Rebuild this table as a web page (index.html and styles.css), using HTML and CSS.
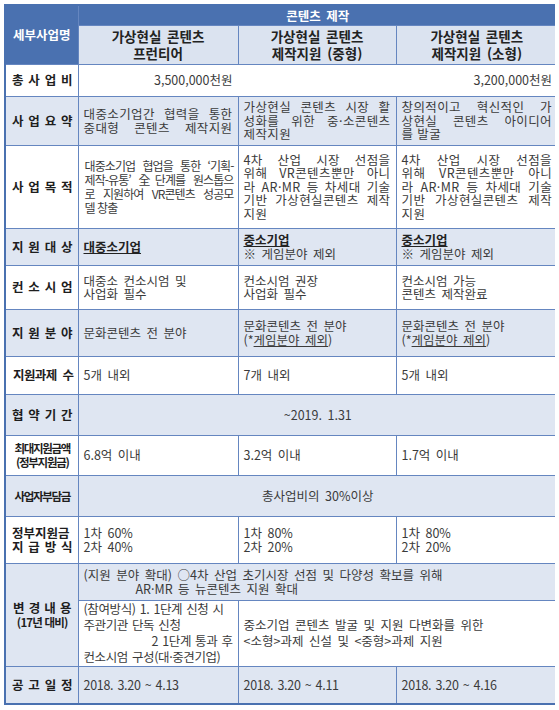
FILE: index.html
```html
<!DOCTYPE html>
<html lang="ko">
  <head>
    <meta charset="UTF-8">
    <title>콘텐츠 제작 지원사업</title>
    <link rel="stylesheet" href="styles.css">
  </head>
  <body>

    <table class="plan">
      <colgroup>
        <col class="c-label">
        <col class="c-one">
        <col class="c-two">
        <col class="c-three">
      </colgroup>

      <tr class="r-head">
        <td class="head dark" rowspan="2">세부사업명</td>
        <td class="head dark" colspan="3">콘텐츠 제작</td>
      </tr>
      <tr class="r-sub">
        <td class="sub">가상현실 콘텐츠<br>프런티어</td>
        <td class="sub">가상현실 콘텐츠<br>제작지원 (중형)</td>
        <td class="sub">가상현실 콘텐츠<br>제작지원 (소형)</td>
      </tr>

      <tr class="r-total">
        <td class="label">총 사 업 비</td>
        <td class="num open-r">3,500,000천원</td>
        <td class="num" colspan="2">3,200,000천원</td>
      </tr>

      <tr class="r-summary blue">
        <td class="label">사 업 요 약</td>
        <td class="jus">
          <span>대중소기업간 협력을 통한</span>
          <span>중대형 콘텐츠 제작지원</span>
        </td>
        <td class="jus">
          <span>가상현실 콘텐츠 시장 활</span>
          <span>성화를 위한 중·소콘텐츠</span>
          <span class="last">제작지원</span>
        </td>
        <td class="jus">
          <span>창의적이고 혁신적인 가</span>
          <span>상현실 콘텐츠 아이디어</span>
          <span class="last">를 발굴</span>
        </td>
      </tr>

      <tr class="r-purpose">
        <td class="label">사 업 목 적</td>
        <td class="jus tight">
          <span>대중소기업 협업을 통한 ‘기획-</span>
          <span>제작-유통’ 全단계를 원스톱으</span>
          <span>로 지원하여 VR콘텐츠 성공모</span>
          <span class="last">델 창출</span>
        </td>
        <td class="jus">
          <span>4차 산업 시장 선점을</span>
          <span>위해 VR콘텐츠뿐만 아니</span>
          <span>라 AR·MR 등 차세대 기술</span>
          <span>기반 가상현실콘텐츠 제작</span>
          <span class="last">지원</span>
        </td>
        <td class="jus">
          <span>4차 산업 시장 선점을</span>
          <span>위해 VR콘텐츠뿐만 아니</span>
          <span>라 AR·MR 등 차세대 기술</span>
          <span>기반 가상현실콘텐츠 제작</span>
          <span class="last">지원</span>
        </td>
      </tr>

      <tr class="r-target blue">
        <td class="label">지 원 대 상</td>
        <td><b class="ul">대중소기업</b></td>
        <td><b class="ul">중소기업</b><br>※ 게임분야 제외</td>
        <td><b class="ul">중소기업</b><br>※ 게임분야 제외</td>
      </tr>

      <tr class="r-consort">
        <td class="label">컨 소 시 엄</td>
        <td>대중소 컨소시엄 및<br>사업화 필수</td>
        <td>컨소시엄 권장<br>사업화 필수</td>
        <td>컨소시엄 가능<br>콘텐츠 제작완료</td>
      </tr>

      <tr class="r-field blue">
        <td class="label">지 원 분 야</td>
        <td>문화콘텐츠 전 분야</td>
        <td>문화콘텐츠 전 분야<br>(*<u>게임분야 제외</u>)</td>
        <td>문화콘텐츠 전 분야<br>(*<u>게임분야 제외</u>)</td>
      </tr>

      <tr class="r-count">
        <td class="label narrow">지원과제 수</td>
        <td>5개 내외</td>
        <td>7개 내외</td>
        <td>5개 내외</td>
      </tr>

      <tr class="r-period blue">
        <td class="label">협 약 기 간</td>
        <td class="mid" colspan="3">~2019. 1.31</td>
      </tr>

      <tr class="r-max">
        <td class="label two squeeze">최대지원금액<br>(정부지원금)</td>
        <td>6.8억 이내</td>
        <td>3.2억 이내</td>
        <td>1.7억 이내</td>
      </tr>

      <tr class="r-burden blue">
        <td class="label two squeeze">사업자부담금</td>
        <td class="mid" colspan="3">총사업비의 30%이상</td>
      </tr>

      <tr class="r-pay">
        <td class="label stack">
          <span>정부지원금</span>
          <span>지 급 방 식</span>
        </td>
        <td>1차 60%<br>2차 40%</td>
        <td>1차 80%<br>2차 20%</td>
        <td>1차 80%<br>2차 20%</td>
      </tr>

      <tr class="r-change blue">
        <td class="label stack change" rowspan="2">
          <span>변 경 내 용</span>
          <span class="plain">(17년 대비)</span>
        </td>
        <td colspan="3">
          (지원 분야 확대) ○4차 산업 초기시장 선점 및 다양성 확보를 위해<br>
          <span class="indent">AR·MR 등 뉴콘텐츠 지원 확대</span>
        </td>
      </tr>
      <tr class="r-change2">
        <td class="roomy snug">
          (참여방식) 1. 1단계 신청 시<br>
          주관기관 단독 신청<br>
          <span class="right">2 1단계 통과 후</span>
          컨소시엄 구성(대·중견기업)
        </td>
        <td colspan="2" class="roomy">
          중소기업 콘텐츠 발굴 및 지원 다변화를 위한<br>
          &lt;소형&gt;과제 신설 및 &lt;중형&gt;과제 지원
        </td>
      </tr>

      <tr class="r-date blue">
        <td class="label">공 고 일 정</td>
        <td class="date">2018. 3.20 ~ 4.13</td>
        <td class="date">2018. 3.20 ~ 4.11</td>
        <td class="date">2018. 3.20 ~ 4.16</td>
      </tr>
    </table>

  </body>
</html>
```

FILE: styles.css
```css
* {
  box-sizing: border-box;
}

body {
  margin: 4px;
  background: #ffffff;
  font-family: "Noto Sans CJK KR", "Noto Sans", sans-serif;
}

.plan {
  width: 553px;
  border-collapse: collapse;
  table-layout: fixed;
  border: 2px solid #4a71b0;
  font-size: 12.5px;
  color: #3b3b3b;
}

.c-label { width: 73px; }
.c-one   { width: 160px; }
.c-two   { width: 158px; }
.c-three { width: 162px; }

.plan td {
  border: 1px solid #6586c0;
  padding: 0 5px;
  vertical-align: middle;
  line-height: 13.5px;
  word-spacing: 2px;
}

/* row colours */
.blue td {
  background-color: #dfe6f2;
}

/* header */
.head.dark {
  background-color: #4a71b0;
  color: #ffffff;
  font-weight: bold;
  text-align: center;
  font-size: 12.5px;
  word-spacing: 2px;
}

.sub {
  background-color: #dbe3f0;
  color: #222;
  font-weight: bold;
  font-size: 13.5px;
  text-align: center;
}

.plan td.sub {
  line-height: 17px;
}

/* left label column */
.plan td.label {
  color: #1e1e1e;
  font-weight: bold;
  font-size: 12.5px;
  padding: 0 5px 0 6px;
  text-align: justify;
  text-align-last: justify;
  word-spacing: 0;
  letter-spacing: 0;
}

.plan td.label.narrow {
  letter-spacing: -0.6px;
  padding: 0 4px 0 7px;
}

.plan td.label.two {
  text-align-last: center;
  text-align: center;
  font-size: 11.5px;
  line-height: 14px;
  letter-spacing: -1.3px;
}

.label.stack span {
  display: block;
  text-align-last: justify;
  line-height: 14px;
}

.label.change span {
  padding: 0 1px;
}

.label.stack span.plain {
  text-align-last: center;
  font-size: 11.5px;
  letter-spacing: -0.8px;
  white-space: nowrap;
}

/* body cells */
.num {
  text-align: right;
}

.plan td.open-r {
  border-right-color: transparent;
}

.mid {
  text-align: center;
}

.plan td.jus {
  word-spacing: 0;
  letter-spacing: 0.4px;
}

.jus span {
  display: block;
  text-align: justify;
  text-align-last: justify;
}

.jus span.last {
  text-align-last: left;
}

.plan td.jus.tight {
  font-size: 12px;
  letter-spacing: -0.9px;
  line-height: 14px;
  padding: 0 4px 0 6px;
}

.ul {
  color: #222;
  text-decoration: underline;
}

.indent {
  padding-left: 52px;
}

.plan td.roomy {
  line-height: 16px;
}

.plan td.snug {
  letter-spacing: -0.4px;
  word-spacing: 1px;
}

.plan td.date {
  letter-spacing: -0.3px;
  word-spacing: 1px;
}

.right {
  display: block;
  text-align: right;
}

/* row heights */
.r-head    { height: 20px; }
.r-sub     { height: 39px; }
.r-total   { height: 32px; }
.r-summary { height: 49px; }
.r-purpose { height: 83px; }
.r-target  { height: 37px; }
.r-consort { height: 44px; }
.r-field   { height: 47px; }
.r-count   { height: 38px; }
.r-period  { height: 41px; }
.r-max     { height: 40px; }
.r-burden  { height: 41px; }
.r-pay     { height: 47px; }
.r-change  { height: 37px; }
.r-change2 { height: 66px; }
.r-date    { height: 38px; }
```
